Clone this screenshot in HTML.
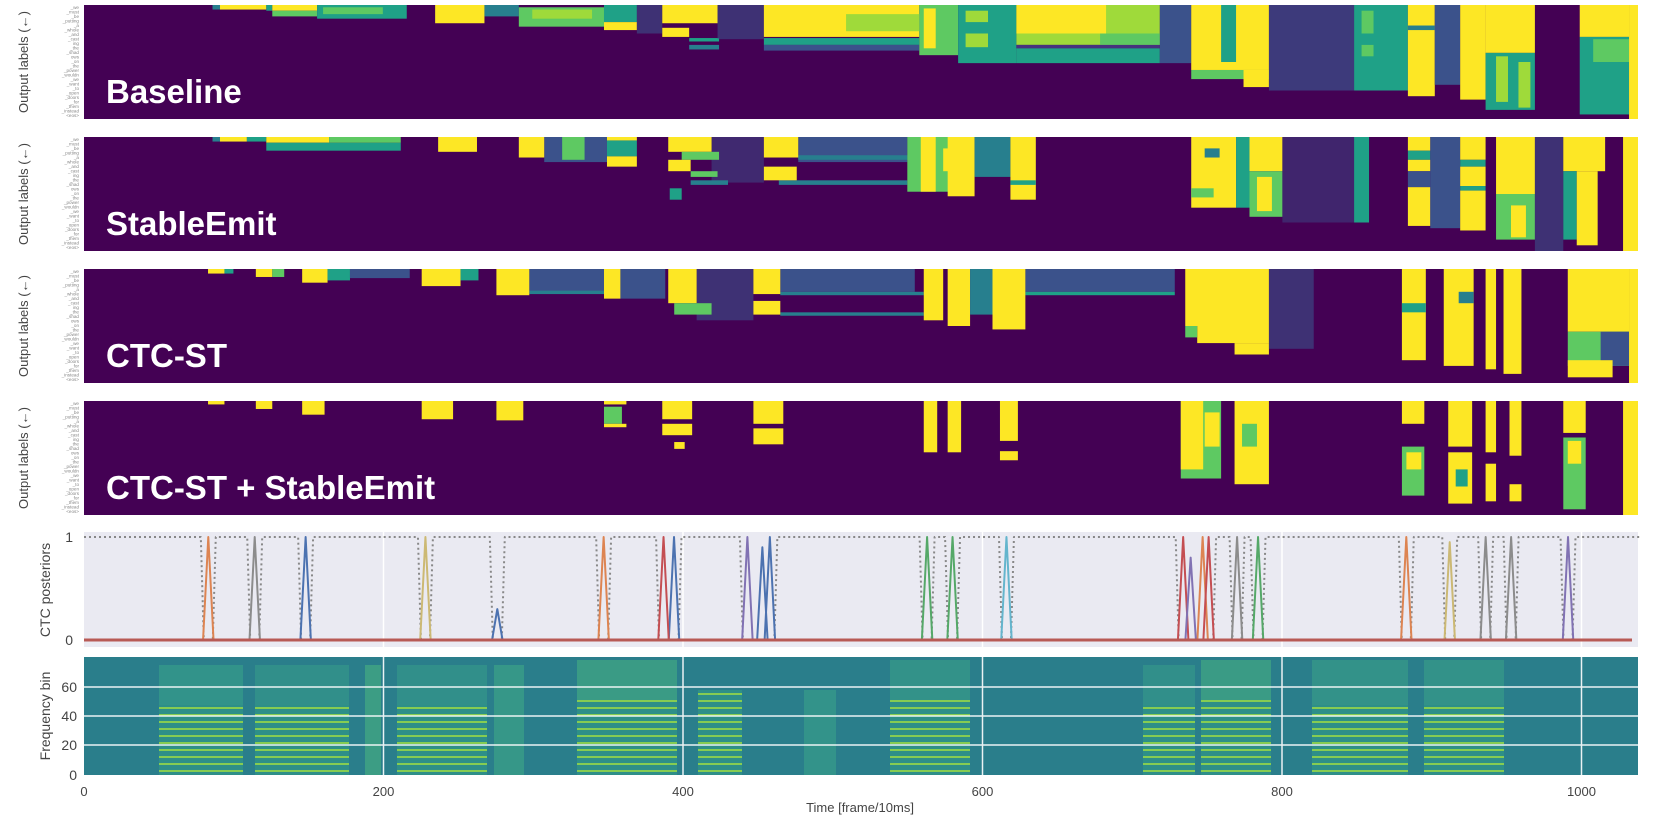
<!DOCTYPE html>
<html><head><meta charset="utf-8"><style>
html,body{margin:0;padding:0;background:#fff;}
svg{display:block;}
text{font-family:"Liberation Sans",sans-serif;}
</style></head><body>
<svg width="1654" height="816" viewBox="0 0 1654 816" xmlns="http://www.w3.org/2000/svg">
<defs>
<pattern id="harm" patternUnits="userSpaceOnUse" width="10" height="7">
<rect width="10" height="7" fill="#2e8f88"/><rect width="10" height="2" fill="#86cc52"/>
</pattern>
<g id="ticks" font-size="4.6" fill="#888" text-anchor="end">
<text x="0" y="4">_we</text><text x="0" y="8.5">_must</text><text x="0" y="13">_be</text><text x="0" y="17.5">_putting</text><text x="0" y="22">_a</text><text x="0" y="26.5">_whole</text><text x="0" y="31">_and</text><text x="0" y="35.5">_cast</text><text x="0" y="40">ing</text><text x="0" y="44.5">_the</text><text x="0" y="49">_shad</text><text x="0" y="53.5">ows</text><text x="0" y="58">_on</text><text x="0" y="62.5">_the</text><text x="0" y="67">_power</text><text x="0" y="71.5">_wouldn</text><text x="0" y="76">_we</text><text x="0" y="80.5">_want</text><text x="0" y="85">_to</text><text x="0" y="89.5">_open</text><text x="0" y="94">_doors</text><text x="0" y="98.5">_for</text><text x="0" y="103">_them</text><text x="0" y="107.5">_instead</text><text x="0" y="112">&lt;eos&gt;</text>
</g>
</defs>

<g font-size="13" fill="#444" text-anchor="middle">
<text transform="translate(28,62) rotate(-90)">Output labels (←)</text>
<text transform="translate(28,194) rotate(-90)">Output labels (←)</text>
<text transform="translate(28,326) rotate(-90)">Output labels (←)</text>
<text transform="translate(28,458) rotate(-90)">Output labels (←)</text>
<text transform="translate(50,590) rotate(-90)" font-size="14">CTC posteriors</text>
<text transform="translate(50,716) rotate(-90)" font-size="14">Frequency bin</text>
</g>
<use href="#ticks" x="79" y="5"/>
<use href="#ticks" x="79" y="137"/>
<use href="#ticks" x="79" y="269"/>
<use href="#ticks" x="79" y="401"/>

<svg x="84" y="5" width="1554" height="114" viewBox="0 0 1040 100" preserveAspectRatio="none">
<rect width="1040" height="100" fill="#440154"/>
<rect x="86" y="0" width="5" height="4" fill="#277f8e"/><rect x="91" y="0" width="31" height="4" fill="#fde725"/><rect x="122" y="0" width="4" height="5" fill="#1fa187"/><rect x="126" y="0" width="30" height="5" fill="#fde725"/><rect x="126" y="5" width="30" height="5" fill="#5ec962"/>
<rect x="156" y="0" width="60" height="12" fill="#1fa187"/><rect x="160" y="2" width="40" height="6" fill="#5ec962"/>
<rect x="235" y="0" width="33" height="16" fill="#fde725"/><rect x="268" y="0" width="23" height="10" fill="#277f8e"/>
<rect x="291" y="2" width="57" height="17" fill="#5ec962"/><rect x="300" y="4" width="40" height="8" fill="#9fda3a"/>
<rect x="348" y="0" width="22" height="15" fill="#1fa187"/><rect x="348" y="15" width="22" height="7" fill="#fde725"/>
<rect x="370" y="0" width="17" height="25" fill="#3b528b" opacity=".6"/>
<rect x="387" y="0" width="37" height="16" fill="#fde725"/><rect x="387" y="20" width="18" height="8" fill="#fde725"/><rect x="405" y="29" width="20" height="3" fill="#1fa187"/><rect x="405" y="35" width="20" height="4" fill="#277f8e"/>
<rect x="424" y="0" width="31" height="30" fill="#3b528b" opacity=".6"/>
<rect x="455" y="0" width="104" height="28" fill="#fde725"/><rect x="510" y="8" width="49" height="15" fill="#9fda3a"/><rect x="455" y="29" width="104" height="6" fill="#1fa187"/><rect x="455" y="35" width="104" height="5" fill="#3b528b"/>
<rect x="559" y="0" width="26" height="44" fill="#5ec962"/><rect x="562" y="3" width="8" height="35" fill="#fde725"/>
<rect x="585" y="0" width="39" height="51" fill="#1fa187"/><rect x="590" y="5" width="15" height="10" fill="#9fda3a"/><rect x="590" y="25" width="15" height="12" fill="#9fda3a"/>
<rect x="624" y="0" width="96" height="35" fill="#9fda3a"/><rect x="624" y="0" width="60" height="25" fill="#fde725"/><rect x="680" y="25" width="40" height="10" fill="#5ec962"/><rect x="624" y="35" width="96" height="3" fill="#46327e"/><rect x="624" y="38" width="96" height="13" fill="#1fa187"/>
<rect x="720" y="0" width="21" height="51" fill="#3b528b"/>
<rect x="741" y="0" width="52" height="57" fill="#fde725"/><rect x="761" y="0" width="10" height="50" fill="#1fa187"/><rect x="741" y="57" width="52" height="8" fill="#5ec962"/><rect x="776" y="57" width="17" height="15" fill="#fde725"/>
<rect x="793" y="0" width="57" height="75" fill="#3b528b" opacity=".7"/>
<rect x="850" y="0" width="36" height="75" fill="#1fa187"/><rect x="855" y="5" width="8" height="20" fill="#5ec962"/><rect x="855" y="35" width="8" height="10" fill="#5ec962"/>
<rect x="886" y="0" width="18" height="80" fill="#fde725"/><rect x="886" y="18" width="18" height="4" fill="#277f8e"/>
<rect x="904" y="0" width="17" height="70" fill="#3b528b"/>
<rect x="921" y="0" width="17" height="83" fill="#fde725"/>
<rect x="938" y="0" width="33" height="42" fill="#fde725"/><rect x="938" y="42" width="33" height="50" fill="#1fa187"/><rect x="945" y="45" width="8" height="40" fill="#9fda3a"/><rect x="960" y="50" width="8" height="40" fill="#9fda3a"/>
<rect x="1001" y="0" width="33" height="28" fill="#fde725"/><rect x="1001" y="28" width="33" height="68" fill="#1fa187"/><rect x="1010" y="30" width="24" height="20" fill="#5ec962"/>
<rect x="1034" y="0" width="6" height="100" fill="#fde725"/>
</svg>

<svg x="84" y="137" width="1554" height="114" viewBox="0 0 1040 100" preserveAspectRatio="none">
<rect width="1040" height="100" fill="#440154"/>
<rect x="86" y="0" width="5" height="4" fill="#277f8e"/><rect x="91" y="0" width="18" height="4" fill="#fde725"/><rect x="109" y="0" width="13" height="4" fill="#1fa187"/><rect x="122" y="0" width="42" height="5" fill="#fde725"/><rect x="122" y="5" width="90" height="7" fill="#1fa187"/><rect x="164" y="0" width="48" height="5" fill="#5ec962"/>
<rect x="237" y="0" width="26" height="13" fill="#fde725"/>
<rect x="308" y="0" width="42" height="22" fill="#3b528b"/><rect x="291" y="0" width="17" height="18" fill="#fde725"/><rect x="320" y="0" width="15" height="20" fill="#5ec962"/><rect x="350" y="3" width="20" height="14" fill="#1fa187"/><rect x="350" y="0" width="20" height="3" fill="#fde725"/><rect x="350" y="17" width="20" height="9" fill="#fde725"/>
<rect x="420" y="0" width="35" height="40" fill="#3b528b" opacity=".5"/>
<rect x="391" y="0" width="29" height="13" fill="#fde725"/><rect x="400" y="13" width="25" height="7" fill="#5ec962"/><rect x="391" y="20" width="15" height="10" fill="#fde725"/><rect x="406" y="30" width="18" height="5" fill="#5ec962"/><rect x="406" y="38" width="25" height="4" fill="#277f8e"/><rect x="392" y="45" width="8" height="10" fill="#1fa187"/>
<rect x="478" y="0" width="73" height="22" fill="#3b528b"/><rect x="478" y="16" width="73" height="4" fill="#277f8e"/><rect x="465" y="38" width="86" height="4" fill="#277f8e"/>
<rect x="455" y="0" width="23" height="18" fill="#fde725"/><rect x="455" y="26" width="22" height="12" fill="#fde725"/>
<rect x="551" y="0" width="34" height="48" fill="#5ec962"/><rect x="560" y="0" width="10" height="48" fill="#fde725"/><rect x="575" y="10" width="10" height="20" fill="#fde725"/>
<rect x="578" y="0" width="18" height="52" fill="#fde725"/><rect x="596" y="0" width="24" height="35" fill="#277f8e"/>
<rect x="620" y="0" width="17" height="55" fill="#fde725"/><rect x="620" y="38" width="17" height="4" fill="#1fa187"/>
<rect x="741" y="0" width="30" height="62" fill="#fde725"/><rect x="750" y="10" width="10" height="8" fill="#277f8e"/><rect x="741" y="45" width="15" height="8" fill="#5ec962"/>
<rect x="771" y="0" width="9" height="62" fill="#1fa187"/>
<rect x="780" y="0" width="22" height="30" fill="#fde725"/><rect x="780" y="30" width="22" height="40" fill="#5ec962"/><rect x="785" y="35" width="10" height="30" fill="#fde725"/>
<rect x="802" y="0" width="48" height="75" fill="#3b528b" opacity=".45"/>
<rect x="850" y="0" width="10" height="75" fill="#1fa187"/>
<rect x="886" y="0" width="15" height="12" fill="#fde725"/><rect x="886" y="12" width="15" height="8" fill="#1fa187"/><rect x="886" y="20" width="15" height="10" fill="#fde725"/><rect x="886" y="30" width="15" height="14" fill="#3b528b"/><rect x="886" y="44" width="15" height="34" fill="#fde725"/>
<rect x="901" y="0" width="20" height="80" fill="#3b528b"/>
<rect x="921" y="0" width="17" height="20" fill="#fde725"/><rect x="921" y="20" width="17" height="6" fill="#1fa187"/><rect x="921" y="26" width="17" height="17" fill="#fde725"/><rect x="921" y="43" width="17" height="4" fill="#1fa187"/><rect x="921" y="47" width="17" height="35" fill="#fde725"/>
<rect x="945" y="0" width="26" height="50" fill="#fde725"/><rect x="945" y="50" width="26" height="40" fill="#5ec962"/><rect x="955" y="60" width="10" height="28" fill="#fde725"/>
<rect x="971" y="0" width="19" height="100" fill="#3b528b" opacity=".6"/>
<rect x="990" y="0" width="28" height="30" fill="#fde725"/><rect x="990" y="30" width="9" height="60" fill="#1fa187"/><rect x="999" y="30" width="14" height="65" fill="#fde725"/>
<rect x="1030" y="0" width="10" height="100" fill="#fde725"/>
</svg>

<svg x="84" y="269" width="1554" height="114" viewBox="0 0 1040 100" preserveAspectRatio="none">
<rect width="1040" height="100" fill="#440154"/>
<rect x="83" y="0" width="11" height="4" fill="#fde725"/><rect x="94" y="0" width="6" height="4" fill="#1fa187"/><rect x="115" y="0" width="11" height="7" fill="#fde725"/><rect x="126" y="0" width="8" height="7" fill="#5ec962"/><rect x="146" y="0" width="17" height="12" fill="#fde725"/><rect x="163" y="0" width="15" height="10" fill="#1fa187"/><rect x="178" y="0" width="40" height="8" fill="#3b528b"/>
<rect x="226" y="0" width="26" height="15" fill="#fde725"/><rect x="252" y="0" width="12" height="10" fill="#1fa187"/>
<rect x="298" y="0" width="50" height="20" fill="#3b528b"/><rect x="298" y="19" width="50" height="3" fill="#277f8e"/><rect x="276" y="0" width="22" height="23" fill="#fde725"/>
<rect x="348" y="0" width="11" height="26" fill="#fde725"/><rect x="359" y="0" width="30" height="26" fill="#3b528b"/>
<rect x="410" y="0" width="38" height="45" fill="#3b528b" opacity=".6"/><rect x="391" y="0" width="19" height="30" fill="#fde725"/><rect x="395" y="30" width="25" height="10" fill="#5ec962"/>
<rect x="466" y="0" width="90" height="20" fill="#3b528b"/><rect x="466" y="20" width="96" height="3" fill="#277f8e"/><rect x="466" y="38" width="96" height="3" fill="#277f8e"/>
<rect x="448" y="0" width="18" height="22" fill="#fde725"/><rect x="448" y="28" width="18" height="12" fill="#fde725"/>
<rect x="562" y="0" width="13" height="45" fill="#fde725"/><rect x="578" y="0" width="15" height="50" fill="#fde725"/><rect x="593" y="0" width="15" height="40" fill="#277f8e"/>
<rect x="630" y="0" width="100" height="20" fill="#3b528b"/><rect x="630" y="20" width="100" height="3" fill="#1fa187"/><rect x="608" y="0" width="22" height="53" fill="#fde725"/>
<rect x="737" y="0" width="56" height="50" fill="#fde725"/><rect x="745" y="50" width="48" height="15" fill="#fde725"/><rect x="770" y="65" width="23" height="10" fill="#fde725"/><rect x="737" y="50" width="8" height="10" fill="#5ec962"/>
<rect x="793" y="0" width="30" height="70" fill="#3b528b" opacity=".6"/>
<rect x="882" y="0" width="16" height="80" fill="#fde725"/><rect x="882" y="30" width="16" height="8" fill="#1fa187"/>
<rect x="910" y="0" width="20" height="85" fill="#fde725"/><rect x="920" y="20" width="10" height="10" fill="#277f8e"/>
<rect x="938" y="0" width="7" height="88" fill="#fde725"/><rect x="950" y="0" width="12" height="92" fill="#fde725"/>
<rect x="993" y="0" width="41" height="55" fill="#fde725"/><rect x="993" y="55" width="41" height="30" fill="#5ec962"/><rect x="1015" y="55" width="19" height="30" fill="#3b528b"/><rect x="993" y="80" width="30" height="15" fill="#fde725"/>
<rect x="1034" y="0" width="6" height="100" fill="#fde725"/>
</svg>

<svg x="84" y="401" width="1554" height="114" viewBox="0 0 1040 100" preserveAspectRatio="none">
<rect width="1040" height="100" fill="#440154"/>
<rect x="83" y="0" width="11" height="3" fill="#fde725"/><rect x="115" y="0" width="11" height="7" fill="#fde725"/><rect x="146" y="0" width="15" height="12" fill="#fde725"/>
<rect x="226" y="0" width="21" height="16" fill="#fde725"/><rect x="276" y="0" width="18" height="17" fill="#fde725"/>
<rect x="348" y="0" width="15" height="3" fill="#fde725"/><rect x="348" y="5" width="12" height="15" fill="#5ec962"/><rect x="348" y="20" width="15" height="3" fill="#fde725"/>
<rect x="387" y="0" width="20" height="16" fill="#fde725"/><rect x="387" y="20" width="20" height="10" fill="#fde725"/><rect x="395" y="36" width="7" height="6" fill="#fde725"/>
<rect x="448" y="0" width="20" height="20" fill="#fde725"/><rect x="448" y="24" width="20" height="14" fill="#fde725"/>
<rect x="562" y="0" width="9" height="45" fill="#fde725"/><rect x="578" y="0" width="9" height="45" fill="#fde725"/>
<rect x="613" y="0" width="12" height="35" fill="#fde725"/><rect x="613" y="44" width="12" height="8" fill="#fde725"/>
<rect x="734" y="0" width="27" height="68" fill="#5ec962"/><rect x="734" y="0" width="15" height="60" fill="#fde725"/><rect x="750" y="10" width="10" height="30" fill="#fde725"/>
<rect x="770" y="0" width="23" height="73" fill="#fde725"/><rect x="775" y="20" width="10" height="20" fill="#5ec962"/>
<rect x="882" y="0" width="15" height="20" fill="#fde725"/><rect x="882" y="40" width="15" height="43" fill="#5ec962"/><rect x="885" y="45" width="10" height="15" fill="#fde725"/>
<rect x="913" y="0" width="16" height="40" fill="#fde725"/><rect x="913" y="45" width="16" height="45" fill="#fde725"/><rect x="918" y="60" width="8" height="15" fill="#1fa187"/>
<rect x="938" y="0" width="7" height="45" fill="#fde725"/><rect x="938" y="55" width="7" height="33" fill="#fde725"/>
<rect x="954" y="0" width="8" height="48" fill="#fde725"/><rect x="954" y="73" width="8" height="15" fill="#fde725"/>
<rect x="990" y="0" width="15" height="28" fill="#fde725"/><rect x="990" y="32" width="15" height="63" fill="#5ec962"/><rect x="993" y="35" width="9" height="20" fill="#fde725"/>
<rect x="1030" y="0" width="10" height="100" fill="#fde725"/>
</svg>

<g font-family="Liberation Sans, sans-serif" font-weight="bold" font-size="33" fill="#fff">
<text x="106" y="103">Baseline</text>
<text x="106" y="235">StableEmit</text>
<text x="106" y="367">CTC-ST</text>
<text x="106" y="499">CTC-ST + StableEmit</text>
</g>

<rect x="84" y="532" width="1554" height="115" fill="#eaeaf2"/>
<g stroke="#fff" stroke-width="1.5">
<line x1="383.5" y1="532" x2="383.5" y2="647"/><line x1="683" y1="532" x2="683" y2="647"/><line x1="982.5" y1="532" x2="982.5" y2="647"/><line x1="1282" y1="532" x2="1282" y2="647"/><line x1="1581.5" y1="532" x2="1581.5" y2="647"/>
</g>
<g transform="translate(84,640) scale(1.4975,-103)" fill="none" stroke-width="2" stroke-linejoin="round">
<path vector-effect="non-scaling-stroke" stroke="#888" stroke-dasharray="2 3" d="M0,1 L78,1 L80,0 L86,0 L88,1 L109,1 L111,0 L117,0 L119,1 L143,1 L145,0 L151,0 L153,1 L223,1 L225,0 L231,0 L233,1 L271,1 L273,0 L279,0 L281,1 L342,1 L344,0 L350,0 L352,1 L382,1 L384,0 L397,0 L399,1 L438,1 L440,0 L461,0 L463,1 L558,1 L560,0 L566,0 L568,1 L575,1 L577,0 L583,0 L585,1 L611,1 L613,0 L619,0 L621,1 L729,1 L731,0 L754,0 L756,1 L765,1 L767,0 L773,0 L775,1 L779,1 L781,0 L787,0 L789,1 L878,1 L880,0 L886,0 L888,1 L907,1 L909,0 L915,0 L917,1 L931,1 L933,0 L939,0 L941,1 L948,1 L950,0 L956,0 L958,1 L986,1 L988,0 L994,0 L996,1 L1040,1"/>
<path vector-effect="non-scaling-stroke" stroke="#dd8452" d="M79.5,0 L83,1 L86.5,0 M343.5,0 L347,1 L350.5,0 M743.5,0 L747,1 L750.5,0 M879.5,0 L883,1 L886.5,0"/>
<path vector-effect="non-scaling-stroke" stroke="#8c8c8c" d="M110.5,0 L114,1 L117.5,0 M766.5,0 L770,1 L773.5,0 M932.5,0 L936,1 L939.5,0 M949.5,0 L953,1 L956.5,0"/>
<path vector-effect="non-scaling-stroke" stroke="#4c72b0" d="M144.5,0 L148,1 L151.5,0 M272.5,0 L276,0.3 L279.5,0 M390.5,0 L394,1 L397.5,0 M449.5,0 L453,0.9 L456.5,0 M454.5,0 L458,1 L461.5,0"/>
<path vector-effect="non-scaling-stroke" stroke="#ccb974" d="M224.5,0 L228,1 L231.5,0 M908.5,0 L912,0.95 L915.5,0"/>
<path vector-effect="non-scaling-stroke" stroke="#c44e52" d="M383.5,0 L387,1 L390.5,0 M730.5,0 L734,1 L737.5,0 M747.5,0 L751,1 L754.5,0"/>
<path vector-effect="non-scaling-stroke" stroke="#8172b3" d="M439.5,0 L443,1 L446.5,0 M735.5,0 L739,0.8 L742.5,0 M987.5,0 L991,1 L994.5,0"/>
<path vector-effect="non-scaling-stroke" stroke="#55a868" d="M559.5,0 L563,1 L566.5,0 M576.5,0 L580,1 L583.5,0 M780.5,0 L784,1 L787.5,0"/>
<path vector-effect="non-scaling-stroke" stroke="#64b5cd" d="M612.5,0 L616,1 L619.5,0"/>
</g>
<line x1="84" y1="640" x2="1632" y2="640" stroke="#b85a55" stroke-width="3"/>

<rect x="84" y="657" width="1554" height="118" fill="#2a7e8b"/>
<g>
<rect x="159" y="705" width="84" height="70" fill="url(#harm)"/><rect x="159" y="665" width="84" height="40" fill="#359889" opacity=".8"/>
<rect x="255" y="705" width="94" height="70" fill="url(#harm)"/><rect x="255" y="665" width="94" height="40" fill="#33938a" opacity=".8"/>
<rect x="365" y="665" width="16" height="110" fill="#3c9d84"/>
<rect x="397" y="705" width="90" height="70" fill="url(#harm)"/><rect x="397" y="665" width="90" height="40" fill="#33938a" opacity=".8"/>
<rect x="494" y="665" width="30" height="110" fill="#369788"/>
<rect x="577" y="700" width="100" height="75" fill="url(#harm)"/><rect x="577" y="660" width="100" height="40" fill="#3fa283" opacity=".8"/>
<rect x="698" y="690" width="44" height="85" fill="url(#harm)"/>
<rect x="804" y="690" width="32" height="85" fill="#33938a"/>
<rect x="890" y="700" width="80" height="75" fill="url(#harm)"/><rect x="890" y="660" width="80" height="40" fill="#369788" opacity=".8"/>
<rect x="1143" y="705" width="52" height="70" fill="url(#harm)"/><rect x="1143" y="665" width="52" height="40" fill="#33938a" opacity=".8"/>
<rect x="1201" y="700" width="70" height="75" fill="url(#harm)"/><rect x="1201" y="660" width="70" height="40" fill="#3fa283" opacity=".8"/>
<rect x="1312" y="705" width="96" height="70" fill="url(#harm)"/><rect x="1312" y="660" width="96" height="45" fill="#369788" opacity=".8"/>
<rect x="1424" y="705" width="80" height="70" fill="url(#harm)"/><rect x="1424" y="660" width="80" height="45" fill="#369788" opacity=".8"/>
</g>
<g stroke="#fff" stroke-width="1.5" opacity=".9">
<line x1="84" y1="687" x2="1638" y2="687"/><line x1="84" y1="716" x2="1638" y2="716"/><line x1="84" y1="745" x2="1638" y2="745"/>
<line x1="383.5" y1="657" x2="383.5" y2="775"/><line x1="683" y1="657" x2="683" y2="775"/><line x1="982.5" y1="657" x2="982.5" y2="775"/><line x1="1282" y1="657" x2="1282" y2="775"/><line x1="1581.5" y1="657" x2="1581.5" y2="775"/>
</g>

<g font-size="14" fill="#444" text-anchor="end">
<text x="73" y="542">1</text><text x="73" y="645">0</text>
<text x="77" y="692">60</text><text x="77" y="721">40</text><text x="77" y="750">20</text><text x="77" y="780">0</text>
</g>
<g font-size="13" fill="#444" text-anchor="middle">
<text x="84" y="796">0</text><text x="383.5" y="796">200</text><text x="683" y="796">400</text><text x="982.5" y="796">600</text><text x="1282" y="796">800</text><text x="1581.5" y="796">1000</text>
<text x="860" y="812" font-size="13">Time [frame/10ms]</text>
</g>
</svg>
</body></html>
